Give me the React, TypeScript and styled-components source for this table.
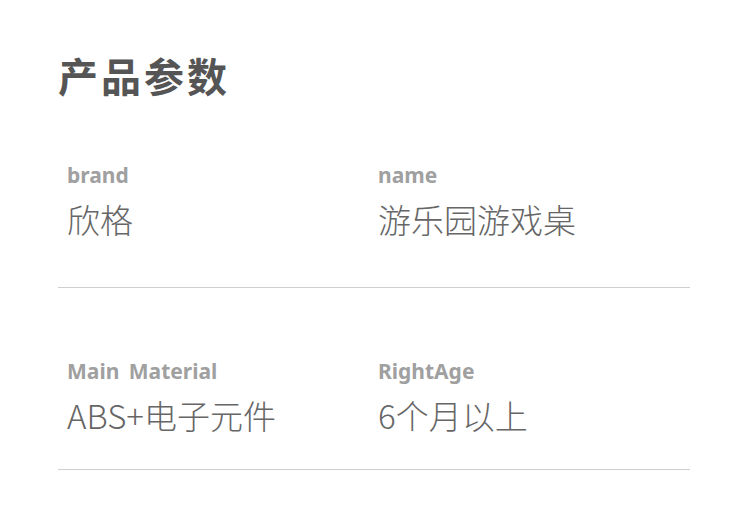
import React from "react";
import styled, { createGlobalStyle } from "styled-components";

const Global = createGlobalStyle`
  html, body { margin: 0; padding: 0; background: #fff; }
  body { width: 750px; height: 506px; overflow: hidden; }
`;

const Page = styled.div`
  width: 750px;
  height: 506px;
  box-sizing: border-box;
  padding: 52px 60px 0 58px;
  font-family: "Noto Sans", "Noto Sans CJK SC", sans-serif;
`;

const Title = styled.h1`
  margin: 0;
  font-family: "Noto Sans CJK SC", sans-serif;
  font-size: 40px;
  font-weight: 700;
  letter-spacing: 3px;
  color: #555;
  line-height: 46px;
`;

const Row = styled.div<{ $top: number; $bottom: number }>`
  display: grid;
  grid-template-columns: 311px 1fr;
  padding: ${(p) => p.$top}px 0 ${(p) => p.$bottom}px 9px;
  border-bottom: 1px solid #cfcfcf;
`;

const Cell = styled.div`
  display: flex;
  flex-direction: column;
  gap: 8px;
`;

const Label = styled.div`
  font-family: "Noto Sans", sans-serif;
  font-size: 21px;
  font-weight: 700;
  color: #a0a0a0;
  line-height: 28px;
  word-spacing: 4px;
`;

const Value = styled.div`
  font-family: "Noto Sans CJK SC", sans-serif;
  font-size: 33px;
  font-weight: 300;
  color: #666;
  line-height: 44px;
`;

const rows = [
  { top: 63, bottom: 46, items: [["brand", "欣格"], ["name", "游乐园游戏桌"]] },
  { top: 69, bottom: 32, items: [["Main Material", "ABS+电子元件"], ["RightAge", "6个月以上"]] },
];

export default function App() {
  return (
    <Page>
      <Global />
      <Title>产品参数</Title>
      {rows.map((r, i) => (
        <Row key={i} $top={r.top} $bottom={r.bottom}>
          {r.items.map(([l, v]) => (
            <Cell key={l}>
              <Label>{l}</Label>
              <Value>{v}</Value>
            </Cell>
          ))}
        </Row>
      ))}
    </Page>
  );
}
